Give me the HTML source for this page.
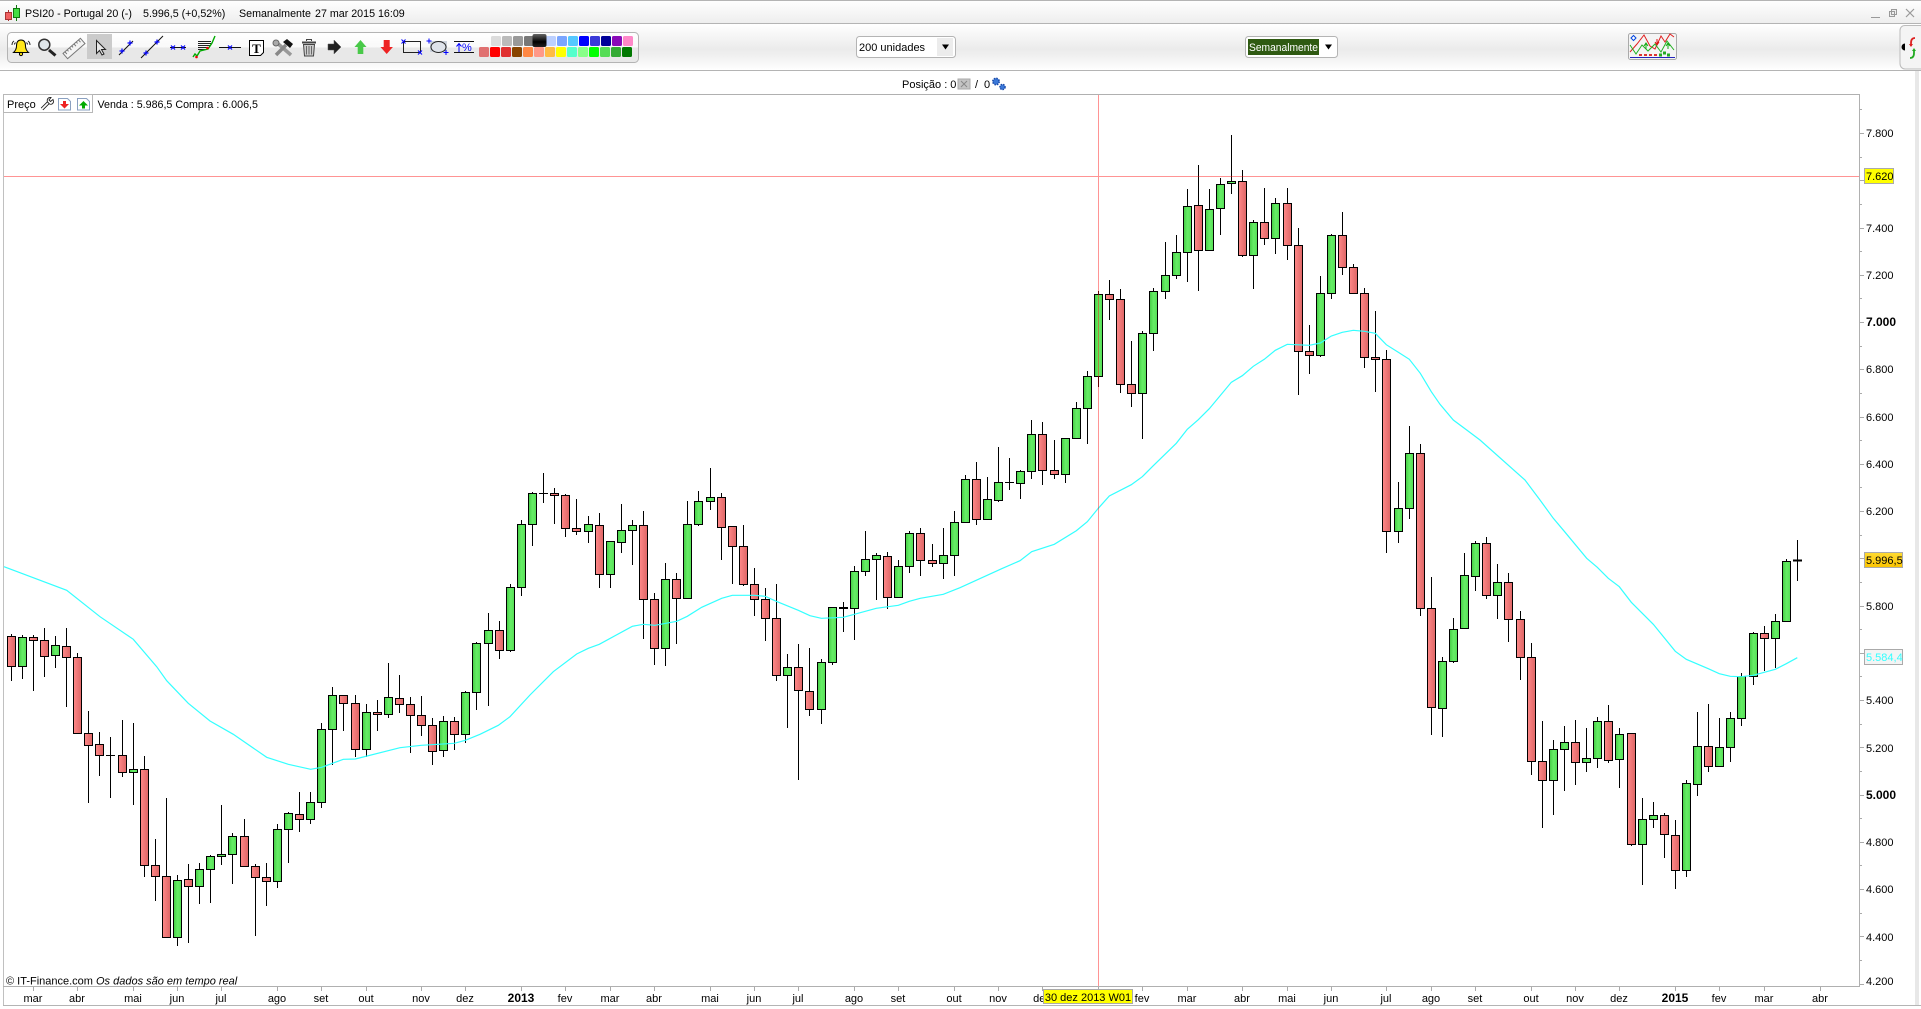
<!DOCTYPE html>
<html lang="pt"><head><meta charset="utf-8"><title>PSI20</title>
<style>
html,body{margin:0;padding:0;background:#fff;overflow:hidden;width:1921px;height:1009px}
svg{display:block;position:absolute;left:0;top:0}
text{font:11px "Liberation Sans",Arial,sans-serif;fill:#000}
.b{font-weight:bold;font-size:12px}
.s{font-size:10.7px}
.m{text-anchor:middle}
</style></head><body>
<svg width="1921" height="1009" viewBox="0 0 1921 1009" xmlns="http://www.w3.org/2000/svg">
<defs>
<linearGradient id="g"><stop offset="0" stop-color="#44cc44"/><stop offset=".5" stop-color="#66ee66"/><stop offset="1" stop-color="#55dd55"/></linearGradient>
<linearGradient id="r"><stop offset="0" stop-color="#ff8888"/><stop offset="1" stop-color="#dd6666"/></linearGradient>
<linearGradient id="t" x2="0" y2="1"><stop offset="0" stop-color="#fff"/><stop offset="1" stop-color="#ededed"/></linearGradient>
<linearGradient id="tb" x2="0" y2="1"><stop offset="0" stop-color="#fff"/><stop offset=".55" stop-color="#ebebeb"/><stop offset=".72" stop-color="#f1f1f1"/><stop offset="1" stop-color="#fff"/></linearGradient>
<linearGradient id="bar" x2="0" y2="1"><stop offset="0" stop-color="#fff"/><stop offset=".5" stop-color="#f9f9f9"/><stop offset=".5" stop-color="#e8e8e8"/><stop offset="1" stop-color="#e8e8e8"/></linearGradient>
<linearGradient id="bk" x2="0" y2="1"><stop offset="0" stop-color="#666"/><stop offset=".6" stop-color="#000"/><stop offset="1" stop-color="#222"/></linearGradient>
<linearGradient id="gold" x2="0" y2="1"><stop offset="0" stop-color="#ffdb33"/><stop offset="1" stop-color="#fbc400"/></linearGradient>
</defs>

<!-- title bar -->
<rect x="0" y="0" width="1921" height="24" fill="url(#t)"/>
<rect x="0" y="0" width="1921" height="1" fill="#b4b4b4"/>
<rect x="0" y="23" width="1921" height="1" fill="#b4b4b4"/>
<path d="M8.500 10V21" stroke="#a33" fill="none"/><rect x="5.500" y="12.500" width="6" height="7" fill="#f06060" stroke="#a33"/>
<path d="M16.500 5V21" stroke="#171" fill="none"/><rect x="13.500" y="8.500" width="6" height="9" fill="#44dd44" stroke="#171"/>
<text class="s" x="25" y="17">PSI20 - Portugal 20 (-)</text>
<text class="s" x="143" y="17">5.996,5 (+0,52%)</text>
<text class="s" x="239" y="17">Semanalmente</text>
<text class="s" x="315" y="17">27 mar 2015 16:09</text>
<path d="M1871 17.500h9" stroke="#999" fill="none"/>
<path d="M1891.500 9.500h5v5h-5zM1889.500 11.500h5v5h-5z" stroke="#999" fill="#eee"/>
<path d="M1906 9l8 8M1914 9l-8 8" stroke="#999" fill="none" stroke-width="1.200"/>

<!-- toolbar band -->
<rect x="0" y="24" width="1921" height="46" fill="url(#tb)"/>
<rect x="0" y="70" width="1921" height="1" fill="#b4b4b4"/>
<rect x="7.500" y="32.500" width="631" height="30" rx="4" fill="url(#bar)" stroke="#b4b4b4"/>

<!-- bell -->
<path d="M21 40c-3 0-4.500 2.200-4.500 6 0 3-1 4.700-3 6.500h15c-2-1.800-3-3.500-3-6.500 0-3.800-1.500-6-4.500-6z" fill="#ffe61a" stroke="#000"/>
<circle cx="21" cy="54" r="1.600" fill="#ffe61a" stroke="#000"/>
<path d="M14 41c-1.500 1-2 2.500-2 4M28 41c1.500 1 2 2.500 2 4M15.500 42.500c-.7.700-1 1.300-1 2M26.500 42.500c.7.700 1 1.300 1 2" stroke="#222" fill="none"/>
<!-- magnifier -->
<circle cx="44.300" cy="44.700" r="5.500" fill="#dfe6ea" stroke="#333" stroke-width="1.500"/>
<path d="M49 50l6.500 5.500" stroke="#222" stroke-width="3" fill="none"/>
<!-- ruler -->
<g transform="translate(74,48.500) rotate(-41)"><rect x="-11.500" y="-3.500" width="23" height="7" fill="#f4f4f4" stroke="#777"/><path d="M-9-3.500v3M-6-3.500v2M-3-3.500v3M0-3.500v2M3-3.500v3M6-3.500v2M9-3.500v3" stroke="#777" fill="none"/></g>
<!-- selected arrow -->
<rect x="87" y="34" width="25" height="25" fill="#cbcbcb"/>
<path d="M96.500 40.500v13l3-3 2.500 4.500 2-1-2.500-4.500h4z" fill="#e8e8e8" stroke="#222"/>
<!-- line tools -->
<path d="M119 55L133 41M141 58L163 36M170 47.500h16M219 47.500h22" stroke="#111" fill="none"/>
<path d="M119.500 51h5M122 48.500v5M127.500 43h5M130 40.500v5M143.500 53h5M146 50.500v5M154.500 42h5M157 39.500v5M171 45.500l4 4M175 45.500l-4 4M181 45.500l4 4M185 45.500l-4 4M228 45.500l4 4M232 45.500l-4 4" stroke="#00f" fill="none" stroke-width="1.200"/>
<!-- trend chart icon -->
<path d="M198 41.500h13M198 43.500h13M198 45.500h13M198 47.500h10M198 49.500h8" stroke="#222" fill="none"/>
<path d="M193 57l2-3 2 2 3-5 4-1 4-1 4-6 3-7" stroke="#0a0" fill="none" stroke-width="1.400"/>
<circle cx="196.500" cy="57" r="1.300" fill="#e00"/><circle cx="207.500" cy="48" r="1.300" fill="#e00"/>
<!-- T doc -->
<path d="M249.500 40.500h14v12l-3 3h-11z" fill="#fff" stroke="#000"/>
<text x="256.500" y="53" text-anchor="middle" style="font:bold 13px 'Liberation Serif',serif">T</text>
<!-- tools -->
<path d="M276 42l15 13" stroke="#999" stroke-width="3.500" fill="none"/><path d="M276 55l10-10" stroke="#888" stroke-width="3.500" fill="none"/>
<circle cx="276" cy="43" r="3" fill="#aaa" stroke="#666"/>
<path d="M283 42l4-3 6 5-3 4z" fill="#111"/>
<!-- trash -->
<path d="M302 42.500h14" stroke="#444" stroke-width="2" fill="none"/><path d="M306.500 41v-1.500h5V41" stroke="#444" fill="none"/>
<path d="M303.500 44.500h11l-1 11.500h-9z" fill="#ccc" stroke="#444"/>
<path d="M306.500 46v8.500M309 46v8.500M311.500 46v8.500" stroke="#666" fill="none"/>
<!-- arrows -->
<path d="M328 44h6v-4l7 7-7 7v-4h-6z" fill="#222" stroke="#555" stroke-width=".5"/>
<path d="M360.500 40l6 7h-3.200v7h-5.600v-7h-3.200z" fill="#49c949"/>
<path d="M383.700 40h6v7h3.200l-6.200 7-6.200-7h3.200z" fill="#ee2222"/>
<!-- rect -->
<rect x="403.500" y="41.500" width="17" height="11" fill="none" stroke="#222"/>
<path d="M401.500 39.500l4 4M405.500 39.500l-4 4M418 50.500l4 4M422 50.500l-4 4" stroke="#00f" fill="none"/>
<!-- ellipse -->
<rect x="430" y="41" width="17" height="11" fill="#ccd2dc"/>
<ellipse cx="438.500" cy="47" rx="7.500" ry="5.500" fill="#dfe3ea" stroke="#222"/>
<path d="M426.500 41h5M429 38.500v5M443.500 52.500h5M446 50v5" stroke="#00f" fill="none"/>
<!-- percent -->
<path d="M454 41.500h20M454 52.500h20" stroke="#111" fill="none"/>
<path d="M459 52V44M456.500 46.500l2.500-3 2.500 3" stroke="#00f" fill="none"/>
<text x="462" y="51" style="font-size:11px;fill:#00f">%</text>
<!-- palette -->
<g>
<rect x="491" y="36" width="10" height="10" rx="1.500" fill="#dcdcdc"/><rect x="502" y="36" width="10" height="10" rx="1.500" fill="#bbb"/><rect x="513" y="36" width="10" height="10" rx="1.500" fill="#999"/><rect x="524" y="36" width="10" height="10" rx="1.500" fill="#777"/>
<rect x="546" y="36" width="10" height="10" rx="1.500" fill="#bcd0ff"/><rect x="557" y="36" width="10" height="10" rx="1.500" fill="#7aa5ff"/><rect x="568" y="36" width="10" height="10" rx="1.500" fill="#55c8ff"/><rect x="579" y="36" width="10" height="10" rx="1.500" fill="#0000ff"/><rect x="590" y="36" width="10" height="10" rx="1.500" fill="#3a3ad8"/><rect x="601" y="36" width="10" height="10" rx="1.500" fill="#000099"/><rect x="612" y="36" width="10" height="10" rx="1.500" fill="#8a0ab8"/><rect x="623" y="36" width="10" height="10" rx="1.500" fill="#ff88c8"/>
<rect x="479" y="47" width="10" height="10" rx="1.500" fill="#e07070"/><rect x="490" y="47" width="10" height="10" rx="1.500" fill="#ff0000"/><rect x="501" y="47" width="10" height="10" rx="1.500" fill="#e03030"/><rect x="512" y="47" width="10" height="10" rx="1.500" fill="#884400"/><rect x="523" y="47" width="10" height="10" rx="1.500" fill="#ff8844"/><rect x="534" y="47" width="10" height="10" rx="1.500" fill="#ff9988"/><rect x="545" y="47" width="10" height="10" rx="1.500" fill="#ffbb44"/><rect x="556" y="47" width="10" height="10" rx="1.500" fill="#ffff00"/><rect x="567" y="47" width="10" height="10" rx="1.500" fill="#55ffcc"/><rect x="578" y="47" width="10" height="10" rx="1.500" fill="#88ff88"/><rect x="589" y="47" width="10" height="10" rx="1.500" fill="#00ff00"/><rect x="600" y="47" width="10" height="10" rx="1.500" fill="#55dd55"/><rect x="611" y="47" width="10" height="10" rx="1.500" fill="#33aa33"/><rect x="622" y="47" width="10" height="10" rx="1.500" fill="#007700"/>
</g>
<rect x="532.500" y="34" width="14" height="13" rx="2" fill="url(#bk)"/>

<!-- dropdowns -->
<rect x="856.500" y="36.500" width="99" height="21" rx="3" fill="#fff" stroke="#b4b4b4"/>
<rect x="937" y="38" width="16" height="18" fill="#ececec"/>
<path d="M942 44.500h7l-3.500 5z" fill="#000"/>
<text x="859" y="51">200 unidades</text>
<rect x="1245.500" y="36.500" width="92" height="21" rx="3" fill="#fff" stroke="#b4b4b4"/>
<rect x="1248" y="39" width="71" height="16" fill="#2f5a12"/>
<text x="1249" y="51" textLength="69" lengthAdjust="spacingAndGlyphs" style="fill:#fff">Semanalmente</text>
<path d="M1325 44.500h7l-3.500 5z" fill="#000"/>

<!-- mini chart button -->
<rect x="1628.500" y="33.500" width="48" height="26" rx="2" fill="#f4f4f4" stroke="#aaa"/>
<path d="M1630 52l7-8 7-9 6 11 5 3 6-13 4 6 5-8 4 3" fill="none" stroke="#e02020"/>
<path d="M1630 45l6 9 6-9 6 6 7-7 6 8 6-11 7 9" fill="none" stroke="#22b022"/>
<path d="M1631 38l2.500-2.500 2.500 2.500-2.500 2.500z" fill="#fff" stroke="#0044dd"/>
<path d="M1646 49v-5M1644 46l2-3 2 3M1668 49v-5M1666 46l2-3 2 3" stroke="#1a1" fill="none"/>
<path d="M1657 39v5M1655 42l2 3 2-3" stroke="#d11" fill="none"/>
<path d="M1639 55h3M1644 55h3M1649 55h3M1654 55h3" stroke="#d33" stroke-width="2" fill="none"/>
<path d="M1659 55h3M1663 53h3M1667 55h3" stroke="#2a2" stroke-width="3" fill="none"/>
<path d="M1630 57.500h45" stroke="#2222bb" fill="none"/>

<!-- right tab -->
<path d="M1921 25.500h-16c-3 0-5 2-5 5v33c0 3 2 5.500 5 5.500h16" fill="#f4f4f4" stroke="#bbb"/>
<path d="M1915 38c-3 0-4 2-4 5v3" stroke="#d22" stroke-width="1.800" fill="none"/><path d="M1909 44l2 3 2-3z" fill="#d22"/>
<path d="M1910 58c3 0 4-2 4-5v-3" stroke="#2a2" stroke-width="1.800" fill="none"/><path d="M1912 51l2-3 2 3z" fill="#2a2"/>
<path d="M1905 43.500a3.500 3.500 0 0 0 0 7z" fill="#000"/>

<!-- position -->
<text x="902" y="88">Posição : 0</text>
<rect x="958" y="79" width="12" height="10" fill="#c4c4c4" stroke="#aaa"/>
<path d="M961 81l6 6M967 81l-6 6" stroke="#888" fill="none"/>
<text x="975" y="88">/</text>
<text x="984" y="88">0</text>
<circle cx="996" cy="81.500" r="3.200" fill="#3a78d8" stroke="#1a4aa8" stroke-width="1.600" stroke-dasharray="1.500 1"/>
<circle cx="1002.500" cy="87" r="2.600" fill="#3a78d8" stroke="#1a4aa8" stroke-width="1.400" stroke-dasharray="1.500 1"/>

<!-- chart frame -->
<rect x="3" y="94" width="1857" height="1" fill="#b0b0b0"/>
<rect x="3" y="94" width="1" height="912" fill="#c0c0c0"/>
<rect x="1859" y="94" width="1" height="892" fill="#b0b0b0"/>
<rect x="3" y="986" width="1857" height="1" fill="#b0b0b0"/>
<rect x="3" y="1005" width="1918" height="1" fill="#b4b4b4"/>
<rect x="1915" y="71" width="4" height="934" fill="#e8e8e8"/>

<!-- legend -->
<rect x="3.500" y="94.500" width="89" height="18" fill="#fff" stroke="#b8b8b8"/>
<text x="7" y="108">Preço</text>
<path d="M42 109l7-7" stroke="#222" stroke-width="3.400" fill="none"/><path d="M42 109l7-7" stroke="#fff" stroke-width="1.600" fill="none"/>
<path d="M53 99.500l-2.500 2-1.500-1.500 2-2.500c-2.500-.5-4.500 1.500-3.500 4.500l2 2c2.500 1 5-1 3.500-4.500z" fill="#fff" stroke="#222" stroke-width=".9"/>
<path d="M58.500 98.500h9l3 3v8.500h-12z" fill="#fff" stroke="#8aa0c0"/><path d="M63 101v3h-3l4.500 4.500 4.500-4.500h-3v-3z" fill="#e22"/>
<path d="M77.500 98.500h9l3 3v8.500h-12z" fill="#fff" stroke="#8aa0c0"/><path d="M83.500 101l-4.500 4.500h3v3h3v-3h3z" fill="#0a0"/>
<text class="s" x="97.500" y="108">Venda : 5.986,5 Compra : 6.006,5</text>

<!-- wicks -->
<path fill="none" stroke="#000" d="M11.500 634V681M22.500 635V679M33.500 635V691M44.500 628V677M55.500 636V668M66.500 628V707M77.500 653V734M88.500 711V803M99.500 732V776M110.500 737V798M122.500 720V777M133.500 723V805M144.500 756V877M155.500 839V901M166.500 798V937M177.500 875V946M188.500 864V943M199.500 863V904M210.500 855V903M221.500 805V865M232.500 833V884M244.500 819V867M255.500 864V936M266.500 863V906M277.500 824V888M288.500 812V863M299.500 792V832M310.500 792V824M321.500 723V808M332.500 687V765M343.500 695V731M355.500 695V757M366.500 704V757M377.500 700V731M388.500 663V718M399.500 675V713M410.500 697V753M421.500 696V736M432.500 718V765M443.500 716V757M454.500 717V750M465.500 691V743M476.500 642V710M488.500 613V706M499.500 621V659M510.500 584V652M521.500 520V596M532.500 492V546M543.500 473V503M554.500 488V524M565.500 494V537M576.500 499V535M588.500 516V543M599.500 513V588M610.500 541V588M621.500 504V553M632.500 520V565M643.500 511V639M654.500 593V665M665.500 563V666M676.500 573V644M687.500 501V599M698.500 491V526M710.500 468V510M721.500 493V560M732.500 526V584M743.500 525V586M754.500 568V616M765.500 588V641M776.500 584V681M787.500 654V728M798.500 644V780M809.500 648V716M821.500 659V724M832.500 607V665M843.500 602V632M854.500 566V640M865.500 531V576M876.500 553V600M887.500 552V609M898.500 560V598M909.500 531V573M920.500 528V576M932.500 544V567M943.500 528V579M954.500 511V576M965.500 475V523M976.500 462V525M987.500 477V520M998.500 447V502M1009.500 458V490M1020.500 470V499M1031.500 420V479M1042.500 422V485M1054.500 440V479M1065.500 438V483M1076.500 402V438M1087.500 371V444M1098.500 291V387M1109.500 280V320M1120.500 289V393M1131.500 341V407M1142.500 331V439M1153.500 288V351M1165.500 242V299M1176.500 235V279M1187.500 189V282M1198.500 165V291M1209.500 189V251M1220.500 178V235M1231.500 135V194M1242.500 170V257M1253.500 220V289M1264.500 188V245M1275.500 198V254M1287.500 188V260M1298.500 228V395M1309.500 325V374M1320.500 276V357M1331.500 234V299M1342.500 212V275M1353.500 264V294M1364.500 288V368M1375.500 311V392M1386.500 350V553M1398.500 482V543M1409.500 426V519M1420.500 444V616M1431.500 577V735M1442.500 657V737M1453.500 618V663M1464.500 553V628M1475.500 541V591M1486.500 537V599M1497.500 564V619M1508.500 573V642M1520.500 611V680M1531.500 643V775M1542.500 721V828M1553.500 740V815M1564.500 726V791M1575.500 720V785M1586.500 728V772M1597.500 717V768M1608.500 705V763M1619.500 728V788M1631.500 733V846M1642.500 798V885M1653.500 802V828M1664.500 813V858M1675.500 820V889M1686.500 780V877M1697.500 712V796M1708.500 704V772M1719.500 718V767M1730.500 712V762M1741.500 673V726M1753.500 632V685M1764.500 626V671M1775.500 614V668M1786.500 559V622M1797.500 540V581M106 755.500h9M539 493.500h9M1005 482.500h9"/>
<path fill="none" stroke="#000" stroke-width="2" d="M839 608h9M1793 560.500h9"/>

<!-- red bodies -->
<g fill="url(#r)" stroke="#000">
<path d="M7.500 636.500h8v30h-8z"/><path d="M29.500 637.500h8v3h-8z"/><path d="M40.500 640.500h8v16h-8z"/><path d="M62.500 646.500h8v11h-8z"/><path d="M73.500 657.500h8v76h-8z"/><path d="M84.500 733.500h8v12h-8z"/><path d="M95.500 744.500h8v11h-8z"/><path d="M118.500 755.500h8v17h-8z"/><path d="M140.500 769.500h8v96h-8z"/><path d="M151.500 865.500h8v11h-8z"/><path d="M162.500 876.500h8v61h-8z"/><path d="M184.500 879.500h8v7h-8z"/><path d="M240.500 836.500h8v30h-8z"/><path d="M251.500 866.500h8v11h-8z"/><path d="M262.500 877.500h8v4h-8z"/><path d="M295.500 814.500h8v5h-8z"/><path d="M339.500 695.500h8v8h-8z"/><path d="M351.500 703.500h8v46h-8z"/><path d="M373.500 712.500h8v2h-8z"/><path d="M395.500 698.500h8v6h-8z"/><path d="M406.500 704.500h8v11h-8z"/><path d="M417.500 715.500h8v10h-8z"/><path d="M428.500 725.500h8v26h-8z"/><path d="M450.500 721.500h8v13h-8z"/><path d="M495.500 630.500h8v20h-8z"/><path d="M550.500 493.500h8v2h-8z"/><path d="M561.500 495.500h8v33h-8z"/><path d="M572.500 528.500h8v3h-8z"/><path d="M595.500 525.500h8v49h-8z"/><path d="M639.500 525.500h8v74h-8z"/><path d="M650.500 599.500h8v49h-8z"/><path d="M672.500 579.500h8v19h-8z"/><path d="M717.500 497.500h8v30h-8z"/><path d="M728.500 526.500h8v20h-8z"/><path d="M739.500 546.500h8v38h-8z"/><path d="M750.500 584.500h8v15h-8z"/><path d="M761.500 599.500h8v19h-8z"/><path d="M772.500 618.500h8v57h-8z"/><path d="M794.500 667.500h8v23h-8z"/><path d="M805.500 691.500h8v18h-8z"/><path d="M883.500 556.500h8v41h-8z"/><path d="M916.500 533.500h8v27h-8z"/><path d="M928.500 560.500h8v3h-8z"/><path d="M972.500 479.500h8v40h-8z"/><path d="M1038.500 434.500h8v36h-8z"/><path d="M1050.500 470.500h8v4h-8z"/><path d="M1105.500 294.500h8v5h-8z"/><path d="M1116.500 299.500h8v85h-8z"/><path d="M1127.500 384.500h8v9h-8z"/><path d="M1194.500 205.500h8v45h-8z"/><path d="M1238.500 181.500h8v74h-8z"/><path d="M1260.500 222.500h8v16h-8z"/><path d="M1283.500 203.500h8v42h-8z"/><path d="M1294.500 245.500h8v106h-8z"/><path d="M1305.500 351.500h8v4h-8z"/><path d="M1338.500 235.500h8v32h-8z"/><path d="M1349.500 267.500h8v26h-8z"/><path d="M1360.500 293.500h8v64h-8z"/><path d="M1371.500 357.500h8v2h-8z"/><path d="M1382.500 359.500h8v172h-8z"/><path d="M1416.500 453.500h8v155h-8z"/><path d="M1427.500 608.500h8v99h-8z"/><path d="M1482.500 543.500h8v52h-8z"/><path d="M1504.500 582.500h8v37h-8z"/><path d="M1516.500 619.500h8v38h-8z"/><path d="M1527.500 657.500h8v104h-8z"/><path d="M1538.500 761.500h8v19h-8z"/><path d="M1571.500 742.500h8v20h-8z"/><path d="M1604.500 721.500h8v39h-8z"/><path d="M1627.500 733.500h8v111h-8z"/><path d="M1660.500 815.500h8v19h-8z"/><path d="M1671.500 835.500h8v35h-8z"/><path d="M1704.500 746.500h8v20h-8z"/><path d="M1760.500 633.500h8v5h-8z"/>
</g>
<!-- green bodies -->
<g fill="url(#g)" stroke="#000">
<path d="M18.500 637.500h8v29h-8z"/><path d="M51.500 645.500h8v10h-8z"/><path d="M129.500 769.500h8v3h-8z"/><path d="M173.500 880.500h8v57h-8z"/><path d="M195.500 869.500h8v17h-8z"/><path d="M206.500 856.500h8v13h-8z"/><path d="M217.500 854.500h8v2h-8z"/><path d="M228.500 836.500h8v18h-8z"/><path d="M273.500 829.500h8v52h-8z"/><path d="M284.500 813.500h8v16h-8z"/><path d="M306.500 802.500h8v17h-8z"/><path d="M317.500 729.500h8v73h-8z"/><path d="M328.500 695.500h8v34h-8z"/><path d="M362.500 712.500h8v37h-8z"/><path d="M384.500 697.500h8v17h-8z"/><path d="M439.500 721.500h8v29h-8z"/><path d="M461.500 692.500h8v42h-8z"/><path d="M472.500 643.500h8v49h-8z"/><path d="M484.500 630.500h8v13h-8z"/><path d="M506.500 587.500h8v63h-8z"/><path d="M517.500 524.500h8v63h-8z"/><path d="M528.500 493.500h8v31h-8z"/><path d="M584.500 524.500h8v7h-8z"/><path d="M606.500 541.500h8v33h-8z"/><path d="M617.500 530.500h8v12h-8z"/><path d="M628.500 525.500h8v5h-8z"/><path d="M661.500 579.500h8v69h-8z"/><path d="M683.500 524.500h8v74h-8z"/><path d="M694.500 501.500h8v23h-8z"/><path d="M706.500 497.500h8v4h-8z"/><path d="M783.500 667.500h8v8h-8z"/><path d="M817.500 662.500h8v47h-8z"/><path d="M828.500 607.500h8v55h-8z"/><path d="M850.500 571.500h8v37h-8z"/><path d="M861.500 559.500h8v12h-8z"/><path d="M872.500 555.500h8v4h-8z"/><path d="M894.500 566.500h8v31h-8z"/><path d="M905.500 533.500h8v33h-8z"/><path d="M939.500 555.500h8v8h-8z"/><path d="M950.500 522.500h8v33h-8z"/><path d="M961.500 479.500h8v43h-8z"/><path d="M983.500 499.500h8v20h-8z"/><path d="M994.500 482.500h8v18h-8z"/><path d="M1016.500 471.500h8v12h-8z"/><path d="M1027.500 434.500h8v37h-8z"/><path d="M1061.500 438.500h8v36h-8z"/><path d="M1072.500 408.500h8v30h-8z"/><path d="M1083.500 376.500h8v32h-8z"/><path d="M1094.500 294.500h8v82h-8z"/><path d="M1138.500 333.500h8v60h-8z"/><path d="M1149.500 291.500h8v42h-8z"/><path d="M1161.500 275.500h8v16h-8z"/><path d="M1172.500 252.500h8v23h-8z"/><path d="M1183.500 206.500h8v46h-8z"/><path d="M1205.500 209.500h8v41h-8z"/><path d="M1216.500 184.500h8v24h-8z"/><path d="M1227.500 181.500h8v2h-8z"/><path d="M1249.500 222.500h8v33h-8z"/><path d="M1271.500 203.500h8v35h-8z"/><path d="M1316.500 293.500h8v62h-8z"/><path d="M1327.500 235.500h8v58h-8z"/><path d="M1394.500 508.500h8v23h-8z"/><path d="M1405.500 453.500h8v55h-8z"/><path d="M1438.500 661.500h8v47h-8z"/><path d="M1449.500 629.500h8v32h-8z"/><path d="M1460.500 575.500h8v53h-8z"/><path d="M1471.500 543.500h8v33h-8z"/><path d="M1493.500 582.500h8v13h-8z"/><path d="M1549.500 749.500h8v31h-8z"/><path d="M1560.500 742.500h8v7h-8z"/><path d="M1582.500 758.500h8v4h-8z"/><path d="M1593.500 721.500h8v37h-8z"/><path d="M1615.500 734.500h8v25h-8z"/><path d="M1638.500 819.500h8v25h-8z"/><path d="M1649.500 815.500h8v4h-8z"/><path d="M1682.500 783.500h8v87h-8z"/><path d="M1693.500 746.500h8v38h-8z"/><path d="M1715.500 747.500h8v19h-8z"/><path d="M1726.500 718.500h8v29h-8z"/><path d="M1737.500 676.500h8v42h-8z"/><path d="M1749.500 633.500h8v43h-8z"/><path d="M1771.500 621.500h8v17h-8z"/><path d="M1782.500 561.500h8v60h-8z"/>
</g>

<!-- moving average -->
<polyline fill="none" stroke="#33ffff" stroke-width="1.200" points="4,566.700 66.700,590.300 100,616.700 133.300,639.300 156.700,666.700 166.700,680.700 188.300,703.300 210,721 233.300,734.300 266.700,757.300 288.300,764.300 310.700,769.300 321.700,767.300 343.300,759.300 355.300,759 400,747.700 421.300,745.300 454.300,743.300 465.300,740.300 480,734.300 498.300,725.300 510,716.700 530,695 553.300,671.700 576.700,654 588.300,648.300 599.300,644.300 632.300,626.300 643.300,624.300 655,625.300 676.700,621.300 687.300,616.300 701.700,607.300 721.700,598.300 732.300,595.300 754.300,595.300 765.300,596.300 776.300,601.300 798.300,610.300 810,615.700 821.300,618.300 843.300,617.300 854.300,614.300 876.300,608.300 898.300,605.300 909.300,601.300 920.300,598.300 943.300,594.300 960,587.700 1001.700,568.700 1020,560.700 1031.700,551.700 1054.300,544.300 1076.300,530.700 1087.300,521.700 1098.300,508.300 1109.300,496 1131.300,484.700 1142.300,476.700 1153.300,465.700 1176.300,443.300 1187.300,429.300 1198.300,419.700 1209.300,408.700 1231.300,382.300 1242.300,375.700 1253.300,366.300 1264.300,359.300 1275.300,350.300 1287.300,344.300 1309.300,345.300 1320.300,343 1331.300,336 1342.300,332.300 1353.300,330.300 1364.300,331.300 1375.300,333.300 1386.300,344.700 1398.300,352.300 1409.300,359.300 1420.300,373.300 1431.300,391.700 1440,404.300 1453.300,420 1466.700,430 1480,440 1525,480 1540,500 1553.300,518.300 1564.300,531.300 1586.700,558.300 1597.300,567.300 1608.300,578.300 1619.300,586.700 1631.300,602.300 1653.300,624.300 1675.300,651.300 1686.300,659.300 1708.300,668.700 1719.300,673.700 1730.300,676.300 1741.300,676.700 1753.300,675.300 1775.300,669.300 1786.300,663.700 1797.300,657.700"/>

<!-- crosshair -->
<path d="M4 176.500H1859M1098.500 95V986" stroke="#ff0000" stroke-opacity=".42" fill="none"/>

<!-- y axis ticks -->
<path fill="none" stroke="#aaa" d="M1860 133.500h4M1860 180.500h4M1860 228.500h4M1860 275.500h4M1860 322.500h4M1860 369.500h4M1860 417.500h4M1860 464.500h4M1860 511.500h4M1860 558.500h4M1860 606.500h4M1860 653.500h4M1860 700.500h4M1860 747.500h4M1860 795.500h4M1860 842.500h4M1860 889.500h4M1860 936.500h4M1860 984.500h4M1860 109.500h2M1860 157.500h2M1860 204.500h2M1860 251.500h2M1860 298.500h2M1860 346.500h2M1860 393.500h2M1860 440.500h2M1860 487.500h2M1860 535.500h2M1860 582.500h2M1860 629.500h2M1860 676.500h2M1860 724.500h2M1860 771.500h2M1860 818.500h2M1860 865.500h2M1860 913.500h2M1860 960.500h2"/>
<g>
<text x="1866" y="137">7.800</text><text x="1866" y="184">7.600</text><text x="1866" y="232">7.400</text><text x="1866" y="279">7.200</text>
<text x="1866" y="326" class="b">7.000</text>
<text x="1866" y="373">6.800</text><text x="1866" y="421">6.600</text><text x="1866" y="468">6.400</text><text x="1866" y="515">6.200</text><text x="1866" y="562">6.000</text><text x="1866" y="610">5.800</text><text x="1866" y="657">5.600</text><text x="1866" y="704">5.400</text><text x="1866" y="752">5.200</text>
<text x="1866" y="799" class="b">5.000</text>
<text x="1866" y="846">4.800</text><text x="1866" y="893">4.600</text><text x="1866" y="941">4.400</text><text x="1866" y="985">4.200</text>
</g>
<rect x="1864.500" y="168.500" width="29" height="15" fill="#ffff00" stroke="#aaa"/>
<text x="1866" y="180">7.620</text>
<rect x="1864.500" y="552.500" width="38" height="15" fill="url(#gold)" stroke="#aaa"/>
<text x="1866" y="564">5.996,5</text>
<rect x="1864.500" y="649.500" width="38" height="15" fill="#f4f4f4" stroke="#aaa"/>
<text x="1866" y="661" style="fill:#33ffff">5.584,4</text>

<!-- x axis -->
<path fill="none" stroke="#aaa" d="M33.500 987v4M77.500 987v4M133.500 987v4M177.500 987v4M221.500 987v4M277.500 987v4M321.500 987v4M366.500 987v4M421.500 987v4M465.500 987v4M521.500 987v4M565.500 987v4M610.500 987v4M654.500 987v4M710.500 987v4M754.500 987v4M798.500 987v4M854.500 987v4M898.500 987v4M954.500 987v4M998.500 987v4M1042.500 987v4M1098.500 987v4M1142.500 987v4M1187.500 987v4M1242.500 987v4M1287.500 987v4M1331.500 987v4M1386.500 987v4M1431.500 987v4M1475.500 987v4M1531.500 987v4M1575.500 987v4M1619.500 987v4M1675.500 987v4M1719.500 987v4M1764.500 987v4M1820.500 987v4"/>
<g>
<text class="m" x="33" y="1002">mar</text><text class="m" x="77" y="1002">abr</text><text class="m" x="133" y="1002">mai</text><text class="m" x="177" y="1002">jun</text><text class="m" x="221" y="1002">jul</text><text class="m" x="277" y="1002">ago</text><text class="m" x="321" y="1002">set</text><text class="m" x="366" y="1002">out</text><text class="m" x="421" y="1002">nov</text><text class="m" x="465" y="1002">dez</text>
<text class="m b" x="521" y="1002">2013</text>
<text class="m" x="565" y="1002">fev</text><text class="m" x="610" y="1002">mar</text><text class="m" x="654" y="1002">abr</text><text class="m" x="710" y="1002">mai</text><text class="m" x="754" y="1002">jun</text><text class="m" x="798" y="1002">jul</text><text class="m" x="854" y="1002">ago</text><text class="m" x="898" y="1002">set</text><text class="m" x="954" y="1002">out</text><text class="m" x="998" y="1002">nov</text><text class="m" x="1042" y="1002">dez</text>
<text class="m" x="1142" y="1002">fev</text><text class="m" x="1187" y="1002">mar</text><text class="m" x="1242" y="1002">abr</text><text class="m" x="1287" y="1002">mai</text><text class="m" x="1331" y="1002">jun</text><text class="m" x="1386" y="1002">jul</text><text class="m" x="1431" y="1002">ago</text><text class="m" x="1475" y="1002">set</text><text class="m" x="1531" y="1002">out</text><text class="m" x="1575" y="1002">nov</text><text class="m" x="1619" y="1002">dez</text>
<text class="m b" x="1675" y="1002">2015</text>
<text class="m" x="1719" y="1002">fev</text><text class="m" x="1764" y="1002">mar</text><text class="m" x="1820" y="1002">abr</text>
</g>
<rect x="1043.500" y="989.500" width="89" height="14" fill="#ffff00" stroke="#aaa"/>
<text class="m" x="1088" y="1001">30 dez 2013 W01</text>

<!-- footer note -->
<text x="6" y="984.500">© IT-Finance.com</text>
<text x="96" y="984.500" style="font-style:italic">Os dados são em tempo real</text>
</svg>
</body></html>
